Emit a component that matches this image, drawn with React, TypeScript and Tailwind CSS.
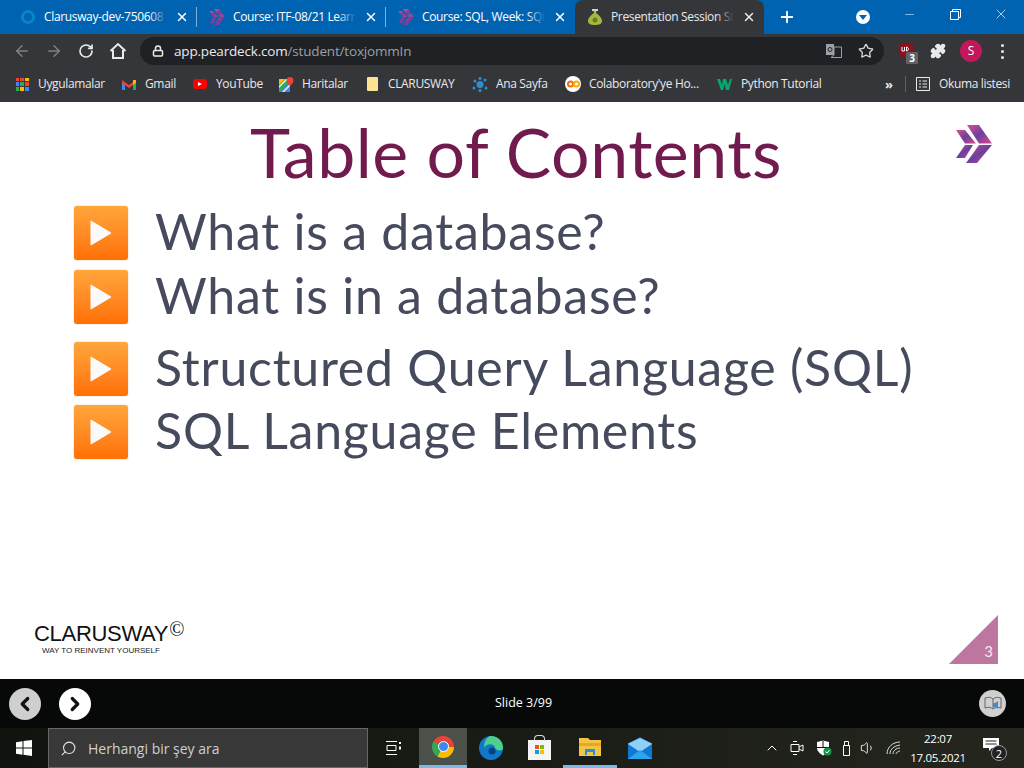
import type { JSX } from 'react';
import { ArrowLeft, ArrowRight, RotateCw, Lock, Star, Puzzle, X, Plus, Minus, ChevronLeft, ChevronRight, ChevronUp, Search, Volume1 } from 'lucide-react';

const uiFont = "font-['Open_Sans','Noto_Sans',sans-serif]";

function PurpleChevrons({ size = 16 }: { size?: number }): JSX.Element {
  return (
    <svg width={size} height={size} viewBox="0 0 36 38">
      <defs>
        <linearGradient id="chev" x1="0" y1="0" x2="1" y2="1">
          <stop offset="0" stopColor="#e0508f" />
          <stop offset="0.5" stopColor="#6a3f9e" />
          <stop offset="1" stopColor="#d9488c" />
        </linearGradient>
      </defs>
      <path d="M0 5h9l11 13.500H9z" fill="url(#chev)" />
      <path d="M0 33h9l8-13H9z" fill="url(#chev)" />
      <path d="M11 0h12l13 18.500H23z" fill="url(#chev)" />
      <path d="M10 38h11l15-18H23z" fill="url(#chev)" />
    </svg>
  );
}

function Tab({ icon, title, active }: { icon: JSX.Element; title: string; active?: boolean }): JSX.Element {
  return (
    <div
      className={
        'flex h-[34px] w-[189px] shrink-0 items-center pl-[12px] pr-[8px] ' +
        (active ? 'rounded-t-[8px] bg-[#35363a] text-[#e8eaed]' : 'text-white')
      }
    >
      <div className="flex w-[24px] shrink-0 items-center">{icon}</div>
      <div className="relative w-[124px] overflow-hidden whitespace-nowrap text-[12px] tracking-[-0.35px]">
        {title}
        <span
          className={
            'absolute right-0 top-0 h-full w-[18px] bg-gradient-to-r from-transparent ' +
            (active ? 'to-[#35363a]' : 'to-[#0063b1]')
          }
        />
      </div>
      <X size={14} strokeWidth={2.5} className="ml-[8px] shrink-0" />
    </div>
  );
}

function Bookmark({ icon, label, w }: { icon: JSX.Element; label: string; w: string }): JSX.Element {
  return (
    <div className={'flex shrink-0 items-center gap-[8px] ' + w}>
      <span className="flex w-[16px] shrink-0 justify-center">{icon}</span>
      <span className="whitespace-nowrap text-[12px] tracking-[-0.35px] text-[#e8eaed]">{label}</span>
    </div>
  );
}

function ContentRow({ text, className }: { text: string; className: string }): JSX.Element {
  return (
    <div className={'flex items-center ' + className}>
      <div className="flex h-[54px] w-[54px] items-center justify-center rounded-[3px] bg-gradient-to-b from-[#ffa63a] to-[#ff6f00] shadow-[0_0_1px_#c46a1a]">
        <svg width="22" height="26" viewBox="0 0 22 26">
          <path d="M1 1l20 12L1 25z" fill="#fafafa" stroke="#fafafa" strokeLinejoin="round" />
        </svg>
      </div>
      <span className="ml-[27px] whitespace-nowrap pb-[4px] text-[50px] font-normal leading-[50px] tracking-[0.75px] text-[#454b5c]">{text}</span>
    </div>
  );
}

export default function App(): JSX.Element {
  return (
    <div className={'flex h-[768px] w-[1024px] flex-col overflow-hidden bg-black ' + uiFont}>
      {/* Tab strip */}
      <div className="flex h-[34px] items-center bg-[#0063b1] pl-[8px]">
        <Tab title="Clarusway-dev-750608" icon={<span className="ml-[1px] h-[14px] w-[14px] rounded-full border-[3px] border-[#0a84c8]" />} />
        <span className="-ml-px h-[20px] w-px shrink-0 bg-[#7fb0da]" />
        <Tab title="Course: ITF-08/21 Learn" icon={<PurpleChevrons />} />
        <span className="-ml-px h-[20px] w-px shrink-0 bg-[#7fb0da]" />
        <Tab title="Course: SQL, Week: SQL" icon={<PurpleChevrons />} />
        <Tab
          active
          title="Presentation Session Stu"
          icon={
            <svg width="16" height="18" viewBox="0 0 16 18">
              <path d="M6 1h4L9 5c3 2 6 5 6 8 0 3-3 4-7 4s-7-1-7-4c0-3 3-6 6-8z" fill="#a5b83c" />
              <circle cx="8" cy="12" r="2.500" fill="#6c7a2a" />
              <path d="M5 1h6v2H5z" fill="#cfd2c0" />
            </svg>
          }
        />
        <Plus size={18} strokeWidth={2.5} className="ml-[14px] shrink-0 text-white" />
        <div className="ml-[60px] flex h-[14px] w-[14px] shrink-0 items-center justify-center rounded-full bg-white">
          <span className="h-0 w-0 border-x-[4px] border-t-[5px] border-x-transparent border-t-[#0063b1]" />
        </div>
        <div className="ml-auto flex h-full items-start text-white">
          <div className="flex h-[28px] w-[46px] items-center justify-center"><Minus size={13} strokeWidth={1} /></div>
          <div className="flex h-[28px] w-[46px] items-center justify-center">
            <svg width="11" height="11" viewBox="0 0 11 11" fill="none" stroke="currentColor">
              <path d="M.5 2.500h8v8h-8zM2.500 2.500v-2h8v8h-2" />
            </svg>
          </div>
          <div className="flex h-[28px] w-[46px] items-center justify-center"><X size={16} strokeWidth={1} /></div>
        </div>
      </div>

      {/* Address bar */}
      <div className="flex h-[34px] items-center bg-[#35363a] pl-[13px]">
        <ArrowLeft size={18} className="text-[#7f8184]" />
        <ArrowRight size={18} className="ml-[14px] text-[#7f8184]" />
        <RotateCw size={16} strokeWidth={2.500} className="ml-[15px] text-[#e8eaed]" />
        <svg width="18" height="18" viewBox="0 0 18 18" fill="none" stroke="#e8eaed" strokeWidth="2" className="ml-[15px]">
          <path d="M1.500 9L9 2l7.500 7M4 8v8h10V8" />
        </svg>
        <div className="ml-[13px] flex h-[28px] w-[744px] items-center rounded-full bg-[#202124] pl-[12px]">
          <Lock size={12} strokeWidth={3} className="text-[#e8eaed]" />
          <span className="ml-[10px] text-[13.500px] tracking-[-0.18px] text-[#e8eaed]">app.peardeck.com<span className="text-[#9aa0a6]">/student/toxjommIn</span></span>
          <svg width="16" height="14" viewBox="0 0 16 14" className="ml-auto">
            <path d="M0 0h8v11H0z" fill="#9aa0a6" />
            <path d="M8 3h7.500v10.500H5L8 11z" fill="none" stroke="#9aa0a6" />
            <circle cx="4" cy="5.500" r="2" fill="none" stroke="#202124" />
          </svg>
          <Star size={16} strokeWidth={2} className="ml-[16px] mr-[10px] text-[#d4d6d9]" />
        </div>
        <div className="relative ml-[14px] flex w-[16px] justify-center">
          <svg width="14" height="16" viewBox="0 0 14 16">
            <path d="M0 1.500L7 0l7 1.500V8c0 4-3 6.500-7 8-4-1.500-7-4-7-8z" fill="#8f0f1c" />
            <path d="M3 4v4h2.500V4M7.500 4v4c2.500 0 2.500-4 0-4z" fill="none" stroke="#fff" />
          </svg>
          <span className="absolute left-[8px] top-[9px] flex h-[12px] w-[12px] items-center justify-center rounded-[1px] bg-[#5f6368] text-[10px] font-bold leading-none text-white">3</span>
        </div>
        <Puzzle size={16} strokeWidth={2} className="ml-[16px] fill-[#e8eaed] text-[#e8eaed]" />
        <div className="ml-[14px] flex h-[22px] w-[22px] items-center justify-center rounded-full bg-[#c2185b] text-[12px] text-white">S</div>
        <div className="ml-[19px] flex flex-col gap-[3px]">
          <span className="h-[3px] w-[3px] rounded-full bg-[#e8eaed]" />
          <span className="h-[3px] w-[3px] rounded-full bg-[#e8eaed]" />
          <span className="h-[3px] w-[3px] rounded-full bg-[#e8eaed]" />
        </div>
      </div>

      {/* Bookmarks bar */}
      <div className="flex h-[34px] items-center bg-[#35363a] pb-[2px] pl-[14px]">
        <Bookmark
          w="w-[107px]"
          label="Uygulamalar"
          icon={
            <span className="grid h-[13px] w-[13px] grid-cols-3 gap-[1px]">
              <i className="bg-[#ea4335]" /><i className="bg-[#ea4335]" /><i className="bg-[#fbbc04]" />
              <i className="bg-[#4285f4]" /><i className="bg-[#34a853]" /><i className="bg-[#ea4335]" />
              <i className="bg-[#34a853]" /><i className="bg-[#fbbc04]" /><i className="bg-[#4285f4]" />
            </span>
          }
        />
        <Bookmark
          w="w-[71px]"
          label="Gmail"
          icon={
            <svg width="14" height="11" viewBox="0 0 14 11">
              <path d="M0 2v9h3V5z" fill="#4285f4" />
              <path d="M14 2v9h-3V5z" fill="#34a853" />
              <path d="M0 1l7 5 7-5v3L7 9 0 4z" fill="#ea4335" />
              <path d="M11 1l3 0v3l-3 2z" fill="#fbbc04" />
            </svg>
          }
        />
        <Bookmark
          w="w-[86px]"
          label="YouTube"
          icon={
            <span className="flex h-[10px] w-[14px] items-center justify-center rounded-[3px] bg-[#f00]">
              <span className="h-0 w-0 border-y-[2.500px] border-l-[4px] border-y-transparent border-l-white" />
            </span>
          }
        />
        <Bookmark
          w="w-[86px]"
          label="Haritalar"
          icon={
            <svg width="15" height="15" viewBox="0 0 15 15">
              <path d="M0 2h11v13H0z" fill="#34a853" />
              <path d="M0 15L11 6v9z" fill="#4285f4" />
              <path d="M0 2h6L0 8z" fill="#fbbc04" />
              <path d="M0 9l7-7h2L0 11zM3 15l8-8v2l-6 6z" fill="#f1f3f4" />
              <path d="M11 0a3.500 3.500 0 013.500 3.500C14.500 6 11 9 11 9S7.500 6 7.500 3.500A3.500 3.500 0 0111 0z" fill="#ea4335" />
            </svg>
          }
        />
        <Bookmark
          w="w-[108px]"
          label="CLARUSWAY"
          icon={<span className="h-[14px] w-[11px] rounded-[1px] bg-[#fde293]" />}
        />
        <Bookmark
          w="w-[93px]"
          label="Ana Sayfa"
          icon={
            <svg width="16" height="15" viewBox="0 0 16 15" fill="#2b8fd6">
              <circle cx="8" cy="7.500" r="3.500" />
              <circle cx="3" cy="4" r="1.500" /><circle cx="13" cy="3" r="1.500" />
              <circle cx="2" cy="11" r="1.500" /><circle cx="14" cy="11" r="1.500" />
              <circle cx="8" cy="1.500" r="1.500" /><circle cx="8" cy="13.500" r="1.500" />
            </svg>
          }
        />
        <Bookmark
          w="w-[152px]"
          label="Colaboratory'ye Ho..."
          icon={
            <span className="flex h-[16px] w-[16px] items-center justify-center rounded-full bg-[#fff]">
              <svg width="13" height="8" viewBox="0 0 13 8" fill="none" strokeWidth="2">
                <circle cx="3.500" cy="4" r="2.500" stroke="#e8710a" />
                <circle cx="9.500" cy="4" r="2.500" stroke="#f9ab00" />
              </svg>
            </span>
          }
        />
        <Bookmark
          w="w-[168px]"
          label="Python Tutorial"
          icon={
            <svg width="16" height="11" viewBox="0 0 16 11" fill="#04aa6d">
              <path d="M0 0h3l2 6 1-6h3l2 6 2-6h2l-3 11H9L7.500 5 6 11H4z" />
            </svg>
          }
        />
        <span className="w-[7px] shrink-0 text-[13px] font-bold leading-none text-[#e8eaed]">»</span>
        <span className="ml-[13px] h-[16px] w-px shrink-0 bg-[#5f6368]" />
        <svg width="14" height="14" viewBox="0 0 14 14" fill="none" stroke="#e8eaed" className="ml-[10px] shrink-0">
          <path d="M.5.500h13v13H.500zM3 4h2M3 7h2M3 10h2M6.500 4H11M6.500 7H11M6.500 10H11" />
        </svg>
        <span className="ml-[9px] whitespace-nowrap text-[12px] tracking-[-0.35px] text-[#e8eaed]">Okuma listesi</span>
      </div>

      {/* Slide */}
      <div className="relative flex h-[577px] flex-col bg-white font-['Lato',sans-serif]">
        <h1 className="mt-[11px] pl-[8px] text-center text-[68px] font-normal leading-[78px] tracking-[0.5px] text-[#701a4d]">Table of Contents</h1>
        <div className="absolute right-[31px] top-[23px]">
          <PurpleChevrons size={38} />
        </div>
        <div className="pl-[74px]">
          <ContentRow text="What is a database?" className="mt-[15px]" />
          <ContentRow text="What is in a database?" className="mt-[10px]" />
          <ContentRow text="Structured Query Language (SQL)" className="mt-[18px]" />
          <ContentRow text="SQL Language Elements" className="mt-[9px]" />
        </div>
        <div className="mt-auto flex items-end justify-between pb-[15px] pl-[34px] pr-[26px]">
          <div className="pb-[8px] font-['Liberation_Sans',sans-serif]">
            <div className="flex items-start text-[22px] leading-[24px] tracking-[-0.3px] text-[#111]">
              CLARUSWAY<span className="-mt-[3px] ml-[1px] font-['Liberation_Serif',serif] text-[20px] leading-[20px]">©</span>
            </div>
            <div className="ml-[8px] text-[8px] font-medium leading-[10px] text-[#222]">WAY TO REINVENT YOURSELF</div>
          </div>
          <div className="relative h-[49px] w-[49px]">
            <svg width="49" height="49" viewBox="0 0 49 49"><path d="M0 49L49 0v49z" fill="#bd76a0" /></svg>
            <span className="absolute right-[5px] top-[26px] text-[15px] leading-[20px] text-[#f5e6ee]">3</span>
          </div>
        </div>
      </div>

      {/* Slide controls */}
      <div className="flex h-[49px] items-center bg-[#070909] pl-[9px] pr-[18px]">
        <div className="flex h-[32px] w-[32px] items-center justify-center rounded-full bg-[#cfcfcf]">
          <ChevronLeft size={22} strokeWidth={3.500} className="text-[#111]" />
        </div>
        <div className="ml-[18px] flex h-[32px] w-[32px] items-center justify-center rounded-full bg-white">
          <ChevronRight size={22} strokeWidth={3.500} className="text-[#111]" />
        </div>
        <span className="ml-[404px] whitespace-nowrap text-[12.500px] text-white">Slide 3/99</span>
        <div className="ml-auto flex h-[27px] w-[27px] items-center justify-center rounded-full bg-[#cfcfcf]">
          <svg width="18" height="16" viewBox="0 0 18 16" fill="none">
            <path d="M1 2c3-1 6-1 8 1 2-2 5-2 8-1v10c-3-1-6-1-8 1-2-2-5-2-8-1zM9 3v10" stroke="#666" />
            <path d="M9 7h2l3-2v8l-3-2H9z" fill="#3b8fd0" />
          </svg>
        </div>
      </div>

      {/* Windows taskbar */}
      <div className="flex h-[40px] items-center bg-gradient-to-r from-[#10140f] via-[#191c15] to-[#25271f] text-white">
        <div className="flex w-[48px] shrink-0 justify-center">
          <svg width="16" height="16" viewBox="0 0 16 16" fill="#fff">
            <path d="M0 2.300l6.500-1v6.300H0zM7.500 1.100L16 0v7.600H7.500zM0 8.500h6.500v6.300l-6.500-1zM7.500 8.500H16V16l-8.500-1.200z" />
          </svg>
        </div>
        <div className="flex h-[40px] w-[320px] shrink-0 items-center border border-[#666] bg-[#383838] pl-[11px]">
          <Search size={17} strokeWidth={1.500} className="-scale-x-100 text-[#e6e6e6]" />
          <span className="ml-[11px] text-[14px] text-[#cfcfcf]">Herhangi bir şey ara</span>
        </div>
        <div className="flex w-[51px] shrink-0 justify-center">
          <svg width="16" height="14" viewBox="0 0 16 14" fill="none" stroke="#fff">
            <path d="M0 .500h11M0 13.500h11M1 4.500h9v5H1z" /><path d="M14 1v2M14 5.500v3" strokeWidth="2" />
          </svg>
        </div>
        <div className="flex h-[40px] w-[48px] shrink-0 items-center justify-center border-b-[3px] border-[#76b9ed] bg-[#4b5049]">
          <span className="flex h-[22px] w-[22px] items-center justify-center rounded-full bg-[conic-gradient(from_-60deg,#ea4335_0_41.6%,#fbbc04_41.6%_75%,#34a853_75%_100%)]">
            <span className="h-[11px] w-[11px] rounded-full border-[1.500px] border-white bg-[#4285f4]" />
          </span>
        </div>
        <div className="flex w-[48px] shrink-0 justify-center">
          <svg width="24" height="24" viewBox="0 0 24 24">
            <circle cx="12" cy="12" r="12" fill="#0f78c8" />
            <path d="M12 0a12 12 0 0112 13c-1 2-7 2-8-1 0-5-9-5-11 0 0-6 3-12 7-12z" fill="#4fd08a" />
            <circle cx="13" cy="15" r="3.500" fill="#0b3f7e" />
          </svg>
        </div>
        <div className="flex w-[48px] shrink-0 justify-center">
          <div className="relative mt-[3px] flex h-[20px] w-[23px] items-center justify-center bg-[#f4f4f4]">
            <span className="absolute -top-[5px] h-[6px] w-[11px] rounded-t-[4px] border border-b-0 border-[#ddd]" />
            <span className="grid grid-cols-2 gap-[1px]">
              <i className="h-[4px] w-[4px] bg-[#f25022]" /><i className="h-[4px] w-[4px] bg-[#7fba00]" />
              <i className="h-[4px] w-[4px] bg-[#00a4ef]" /><i className="h-[4px] w-[4px] bg-[#ffb900]" />
            </span>
          </div>
        </div>
        <div className="flex h-[40px] w-[54px] shrink-0 items-center justify-center border-b-[3px] border-[#76b9ed]">
          <svg width="22" height="18" viewBox="0 0 22 18">
            <path d="M0 0h9l2 2h11v16H0z" fill="#f4c542" />
            <path d="M0 5h22v3H0z" fill="#e5a823" />
            <path d="M6 11h10v6h-2v-3H8v3H6z" fill="#2a8fd9" />
          </svg>
        </div>
        <div className="flex w-[46px] shrink-0 justify-center">
          <svg width="24" height="22" viewBox="0 0 24 22">
            <path d="M0 7L12 0l12 7v15H0z" fill="#0f78d4" />
            <path d="M0 7l12 8 12-8v-.500L12 1 0 6.500z" fill="#8fd0f7" />
            <path d="M0 22l12-9 12 9z" fill="#2da3ea" />
          </svg>
        </div>
        <div className="flex flex-1 items-center pl-[101px]">
          <ChevronUp size={16} strokeWidth={1.500} />
          <svg width="14" height="16" viewBox="0 0 14 16" fill="none" stroke="#fff" className="ml-[10px]">
            <path d="M1 4.500h8v7H1zM9 7l4-2v6l-4-2M3 1.500h4M3 14.500h4" />
          </svg>
          <svg width="16" height="16" viewBox="0 0 16 16" className="ml-[12px]">
            <path d="M1 2l6-1.500L13 2v6c0 3-3 6-6 7.500C4 14 1 11 1 8z" fill="#fff" />
            <path d="M7 .5v7H1M7 7.500h6" stroke="#111" fill="none" />
            <circle cx="11.500" cy="11.500" r="4" fill="#12924a" />
            <path d="M9.500 11.500l1.500 1.500 2.500-3" stroke="#fff" fill="none" />
          </svg>
          <svg width="13" height="17" viewBox="0 0 13 17" fill="none" stroke="#fff" className="ml-[9px]">
            <path d="M2.500 5.500h6v10h-6zM3.500 5.500v-4h4v4" />
          </svg>
          <Volume1 size={16} strokeWidth={1.300} className="ml-[6px]" />
          <svg width="16" height="14" viewBox="0 0 16 14" fill="none" stroke="#ddd" className="ml-[10px]">
            <path d="M1 13C1 6 7 1 14 1M4 13c0-5 4-8 10-9M7 13c0-3 3-6 7-6M10 13c0-1 2-3 4-3" />
          </svg>
          <div className="ml-px flex w-[70px] shrink-0 flex-col items-center text-[11.500px] leading-[19px] tracking-[-0.3px]">
            <span>22:07</span>
            <span className="whitespace-nowrap">17.05.2021</span>
          </div>
          <div className="relative ml-[10px] -mt-[7px]">
            <svg width="16" height="13" viewBox="0 0 16 13">
              <path d="M0 0h16v10H9l-3 3v-3H0z" fill="#fff" />
              <path d="M2.500 3h11M2.500 6h11" stroke="#222" />
            </svg>
            <span className="absolute left-[8px] top-[7px] flex h-[16px] w-[16px] items-center justify-center rounded-full border border-[#999] bg-[#222] text-[11px] leading-none">2</span>
          </div>
        </div>
      </div>
    </div>
  );
}
